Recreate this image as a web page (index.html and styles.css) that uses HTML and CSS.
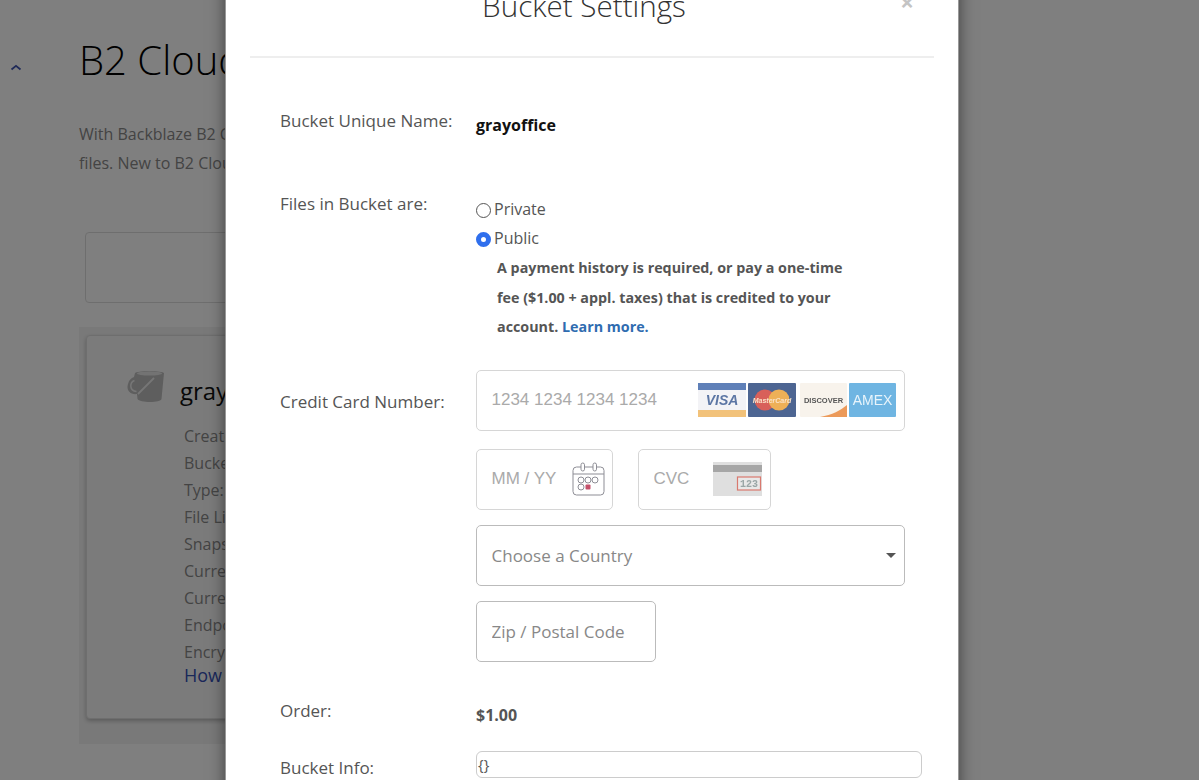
FILE: index.html
```html
<!DOCTYPE html>
<html lang="en">
<head>
    <meta charset="UTF-8">
    <meta name="viewport" content="width=device-width, initial-scale=1.0">
    <title>B2 Cloud Storage Buckets</title>
    <link rel="stylesheet" href="styles.css">
</head>
<body>
    <div class="page">
        <aside class="side">
            <svg class="chev" width="12" height="7" viewBox="0 0 12 7"><path d="M1.5 5.5 6 1.8l4.500 3.700" fill="none" stroke="#3f54b0" stroke-width="1.800"/></svg>
        </aside>
        <main class="main">
            <h1>B2 Cloud Storage Buckets</h1>
            <p class="intro">With Backblaze B2 Cloud Storage, you can store any number of<br>files. New to B2 Cloud Storage? Check out the guide.</p>
            <div class="searchbox"></div>
            <div class="panel">
                <div class="card">
                    <div class="card__head">
                        <svg class="bucket" width="37" height="33" viewBox="0 0 37 33">
                            <path d="M8 3C9 .5 36 .5 37 3L34.500 29c-.5 4-22 4-24 0L10 24C3 25-1 20 1 14c1-4 3-6 6-7z" fill="#bcbcbc"/>
                            <ellipse cx="22.500" cy="3.500" rx="12.500" ry="2" fill="#e6e6e6"/>
                            <path d="M7.500 10.500c-5 2-5.500 10 2 11" fill="none" stroke="#ededed" stroke-width="1.500"/>
                            <path d="M11 24 27 8" stroke="#ededed" stroke-width="1.800"/>
                        </svg>
                        <span class="card__name">grayoffice</span>
                    </div>
                    <ul class="card__info">
                        <li>Created: 01/10/2023</li>
                        <li>Bucket ID: 5f3a</li>
                        <li>Type: Private</li>
                        <li>File Lifecycle: Keep</li>
                        <li>Snapshots: 0</li>
                        <li>Current Files: 0</li>
                        <li>Current Size: 0</li>
                        <li>Endpoint: s3</li>
                        <li>Encryption: Off</li>
                    </ul>
                    <a class="card__link">How to use</a>
                </div>
            </div>
        </main>
    </div>

    <div class="overlay">
        <div class="modal">
            <div class="modal__head">
                <h2>Bucket Settings</h2>
                <span class="modal__close">×</span>
            </div>
            <form class="modal__body">
                <div class="row row--name">
                    <label class="row__label">Bucket Unique Name:</label>
                    <strong class="row__name">grayoffice</strong>
                </div>
                <div class="row row--files">
                    <label class="row__label">Files in Bucket are:</label>
                    <div class="choices">
                        <label class="choice"><input type="radio" name="vis">Private</label>
                        <label class="choice"><input type="radio" name="vis" checked>Public</label>
                        <p class="notice">A payment history is required, or pay a one-time<br>fee ($1.00 + appl. taxes) that is credited to your<br>account. <a>Learn more.</a></p>
                    </div>
                </div>
                <div class="row row--card">
                    <label class="row__label row__label--card">Credit Card Number:</label>
                    <div class="pay">
                        <div class="box box--number">
                            <input class="stripe" placeholder="1234 1234 1234 1234">
                            <svg class="brands" width="198" height="36" viewBox="0 0 198 36">
                                <rect y="1" width="48" height="34" rx="1" fill="#f3f3f6"/>
                                <rect y="1" width="48" height="7" fill="#5f80b8"/>
                                <rect y="28" width="48" height="7" fill="#f2c27a"/>
                                <text class="brand visa" x="24" y="23" text-anchor="middle">VISA</text>
                                <rect x="50" y="1" width="48" height="34" rx="1" fill="#4d6592"/>
                                <circle cx="67" cy="18" r="10.500" fill="#d8605a"/>
                                <circle cx="81" cy="18" r="10.500" fill="#eeb057"/>
                                <text class="brand mc" x="74" y="20.500" text-anchor="middle">MasterCard</text>
                                <rect x="102" y="1" width="47" height="34" rx="1" fill="#f8f3ec"/>
                                <path d="M122 35c12-2 21-7 27-12v12z" fill="#ec9a5a"/>
                                <text class="brand disc" x="125.500" y="21" text-anchor="middle">DISCOVER</text>
                                <rect x="151" y="1" width="47" height="34" rx="1" fill="#6fb5e2"/>
                                <text class="brand amex" x="174.500" y="23" text-anchor="middle">AMEX</text>
                            </svg>
                        </div>
                        <div class="pay__pair">
                            <div class="box box--exp">
                                <input class="stripe" placeholder="MM / YY">
                                <svg class="calendar" width="33" height="34" viewBox="0 0 33 34" fill="none" stroke="#8d8d95" stroke-width="1">
                                    <rect x="1" y="5" width="31" height="28" rx="3.500"/>
                                    <path d="M1 12h31"/>
                                    <rect x="9" y="1" width="3.500" height="8" rx="1.750" fill="#fff"/>
                                    <rect x="21" y="1" width="3.500" height="8" rx="1.750" fill="#fff"/>
                                    <circle cx="9" cy="18" r="3"/>
                                    <circle cx="16" cy="18" r="3"/>
                                    <circle cx="23" cy="18" r="3"/>
                                    <circle cx="9" cy="25" r="3"/>
                                    <rect x="13.500" y="22.500" width="5" height="5" rx="1" fill="#c4506a" stroke="none"/>
                                </svg>
                            </div>
                            <div class="box box--cvc">
                                <input class="stripe" placeholder="CVC">
                                <svg class="cvc" width="49" height="34" viewBox="0 0 49 34">
                                    <rect width="49" height="34" fill="#dfdfdf"/>
                                    <rect y="3" width="49" height="7" fill="#a6a6a6"/>
                                    <rect x="24.500" y="15" width="23" height="13" fill="#e8e8e8" stroke="#d9796f" stroke-width="1.200"/>
                                    <text class="cvc__num" x="36" y="25" text-anchor="middle">123</text>
                                </svg>
                            </div>
                        </div>
                        <div class="box box--country">
                            <select class="plain">
                                <option>Choose a Country</option>
                            </select>
                        </div>
                        <div class="box box--zip">
                            <input class="plain" placeholder="Zip / Postal Code">
                        </div>
                    </div>
                </div>
                <div class="row row--order">
                    <label class="row__label">Order:</label>
                    <strong class="row__price">$1.00</strong>
                </div>
                <div class="row row--info">
                    <label class="row__label row__label--info">Bucket Info:</label>
                    <textarea class="info" rows="1">{}</textarea>
                </div>
            </form>
        </div>
    </div>
</body>
</html>
```

FILE: styles.css
```css
html, body {
    margin: 0;
    height: 100%;
}

body {
    overflow: hidden;
    background: #fff;
    color: #555;
    font: 16px/27px "Open Sans", sans-serif;
}

/* page behind the dialog */
.page {
    display: flex;
    height: 780px;
}

.side {
    flex: none;
    width: 79px;
    padding: 64px 0 0 10px;
    box-sizing: border-box;
}

.chev {
    display: block;
}

.main {
    width: 800px;
}

h1 {
    margin: 32px 0 0;
    color: #000;
    font-size: 40px;
    font-weight: 300;
    line-height: 56px;
}

.intro {
    margin: 32px 0 0;
    color: #888;
    font-size: 16px;
    line-height: 29px;
    white-space: nowrap;
}

.searchbox {
    margin: 54px 0 0 6px;
    height: 69px;
    border: 1px solid #ddd;
    border-radius: 4px;
}

.panel {
    margin-top: 24px;
    padding: 8px 0 25px 7px;
    background: #f3f3f3;
}

.card {
    height: 384px;
    padding: 34px 0 0 40px;
    box-sizing: border-box;
    border: 1px solid #ddd;
    border-radius: 4px;
    box-shadow: 0 2px 4px rgba(0, 0, 0, .25);
    background: #f7f7f7;
}

.card__head {
    display: flex;
    align-items: flex-start;
    gap: 16px;
}

.card__name {
    margin-top: 7px;
    color: #111;
    font-size: 24px;
}

.card__info {
    margin: 19px 0 0 57px;
    padding: 0;
    list-style: none;
    color: #888;
    line-height: 27px;
}

.card__link {
    display: block;
    margin-left: 57px;
    color: #3550b5;
    font-size: 18px;
    line-height: 18px;
}

/* dialog */
.overlay {
    position: absolute;
    top: 0;
    left: 0;
    right: 0;
    bottom: 0;
    overflow: hidden;
    background: rgba(0, 0, 0, .5);
}

.modal {
    width: 734px;
    height: 900px;
    margin: -60px 0 0 225px;
    border-left: 1px solid #999;
    border-right: 1px solid #999;
    box-sizing: border-box;
    box-shadow: 0 5px 15px rgba(0, 0, 0, .5);
    background: #fff;
}

.modal__head {
    display: flex;
    justify-content: center;
    position: relative;
    height: 118px;
    margin: 0 24px;
    padding-right: 16px;
    box-sizing: border-box;
    border-bottom: 2px solid #eee;
}

h2 {
    margin: 48px 0 0;
    color: #333;
    font-size: 29.600px;
    font-weight: 300;
    line-height: 36px;
}

.modal__close {
    position: absolute;
    top: 50px;
    right: 20px;
    color: #c4c4c4;
    font-size: 24px;
    font-weight: 700;
    line-height: 24px;
}

.modal__body {
    padding: 0 0 0 54px;
}

.row {
    display: grid;
    grid-template-columns: 196px 1fr;
}

.row__label {
    color: #555;
    font-size: 17px;
    line-height: 25px;
}

.row--name {
    margin-top: 50px;
}

.row__name {
    padding-top: 4px;
    color: #111;
    font-size: 16px;
}

.row--files {
    margin-top: 52px;
}

.choices {
    padding-top: 4px;
}

.choice {
    display: flex;
    align-items: center;
    gap: 3px;
    height: 29px;
    color: #555;
}

.choice input {
    appearance: none;
    flex: none;
    width: 15px;
    height: 15px;
    margin: 1px 0 0;
    border: 1.500px solid #555;
    border-radius: 50%;
    background: #fff;
}

.choice input:checked {
    border: 5px solid #2f6fed;
}

.notice {
    margin: 0 0 0 21px;
    color: #555;
    font-size: 14.300px;
    font-weight: 700;
    line-height: 29.500px;
}

.notice a {
    color: #2f6cb0;
}

.row--card {
    margin-top: 28px;
}

.row__label--card {
    padding-top: 19px;
}

.pay {
    display: flex;
    flex-direction: column;
    align-items: flex-start;
    gap: 15px;
}

.pay__pair {
    display: flex;
    gap: 25px;
    margin-top: 3px;
}

.box {
    display: flex;
    align-items: center;
    position: relative;
    height: 61px;
    box-sizing: border-box;
    border: 1px solid #d6d6d6;
    border-radius: 5px;
    background: #fff;
}

.box--number {
    width: 429px;
    justify-content: space-between;
    padding-right: 8px;
}

.box--exp {
    width: 137px;
    padding-right: 7px;
}

.box--cvc {
    width: 133px;
    padding-right: 8px;
}

.box--country {
    width: 429px;
    border-color: #bbb;
}

.box--zip {
    width: 180px;
    border-color: #bbb;
}

.stripe,
.plain {
    flex: 1;
    min-width: 0;
    height: 100%;
    padding: 0 0 0 14.500px;
    border: 0;
    outline: 0;
    background: none;
}

.stripe {
    font: 17px "Liberation Sans", sans-serif;
}

.stripe::placeholder {
    color: #aaa;
}

.plain {
    color: #888;
    font: 17px "Open Sans", sans-serif;
}

.plain::placeholder {
    color: #888;
}

select.plain {
    appearance: none;
}

.box--country::after {
    position: absolute;
    top: 27px;
    right: 8px;
    border: 5px solid transparent;
    border-top-color: #555;
    content: '';
}

.brands,
.calendar,
.cvc {
    flex: none;
    filter: blur(.4px);
}

.brand {
    font-family: "Liberation Sans", sans-serif;
    font-weight: 700;
}

.visa {
    fill: #5c76a4;
    font-size: 14px;
    font-style: italic;
}

.mc {
    fill: #fbe3c8;
    font-size: 7px;
    font-style: italic;
}

.disc {
    fill: #555;
    font-size: 7.500px;
}

.amex {
    fill: #e8f4fb;
    font-size: 14px;
    font-weight: 400;
}

.cvc__num {
    fill: #9aa6a6;
    font: 700 10px "Liberation Mono", monospace;
}

.row--order {
    margin-top: 36px;
}

.row__price {
    padding-top: 4px;
    font-size: 16px;
}

.row--info {
    margin-top: 22px;
}

.row__label--info {
    padding-top: 4px;
}

.info {
    display: block;
    width: 446px;
    height: 27px;
    padding: 0 1px;
    box-sizing: border-box;
    border: 1px solid #ccc;
    border-radius: 6px;
    outline: 0;
    resize: none;
    color: #555;
    font: 15px/25px "Open Sans", sans-serif;
}
```
